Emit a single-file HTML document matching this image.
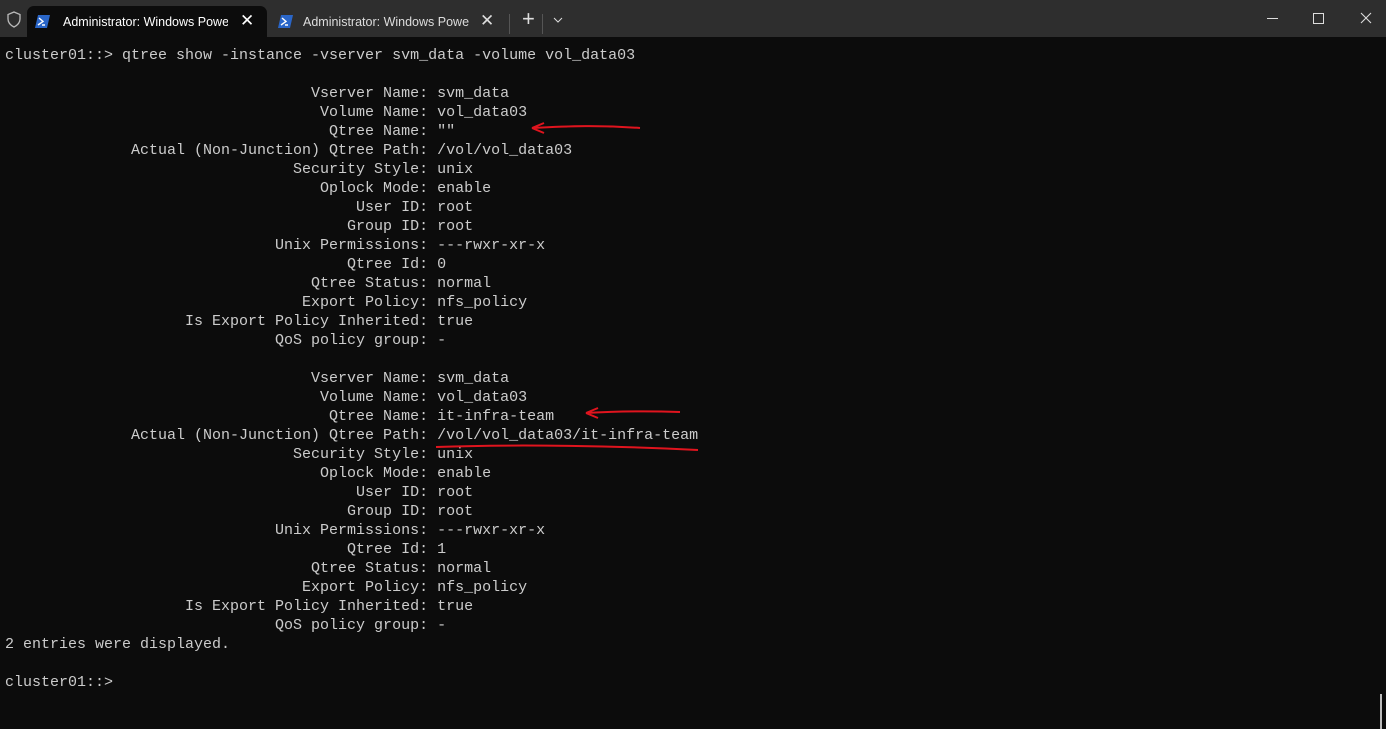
<!DOCTYPE html>
<html><head><style>
html,body{margin:0;padding:0;width:1386px;height:729px;overflow:hidden;background:#0c0c0c;}
.bar{position:absolute;left:0;top:0;width:1386px;height:37px;background:#2e2e2e;}
.tab{position:absolute;top:6px;height:31px;font:12.5px "Liberation Sans",sans-serif;color:#fff;}
.t1{left:27px;width:240px;background:#0c0c0c;border-radius:7px 7px 0 0;}
.t2{left:268px;color:#ddd;}
pre{position:absolute;left:5px;top:46px;margin:0;font:15px/19px "Liberation Mono",monospace;color:#cccccc;}
</style></head><body>
<div class="bar">
<svg style="position:absolute;left:6px;top:11px" width="16" height="17" viewBox="0 0 16 17"><path d="M8 1 L14 3.5 V8 C14 12 11 14.5 8 16 C5 14.5 2 12 2 8 V3.5 Z" fill="none" stroke="#bbb" stroke-width="1.3"/></svg>
<div class="tab t1">
<svg style="position:absolute;left:8px;top:9px" width="15" height="13"><path d="M3 0 H15 L12 13 H0 Z" fill="#2a66c8"/><path d="M4 3 L8 6.5 L3 10 M7 10 H10" stroke="#fff" stroke-width="1.4" fill="none"/></svg>
<span style="position:absolute;left:36px;top:9px;white-space:nowrap;width:165px;overflow:hidden">Administrator: Windows Powe</span>
<span style="position:absolute;left:213px;top:5px;font-size:17px">✕</span>
</div>
<div class="tab t2" style="top:6px;width:240px">
<svg style="position:absolute;left:10px;top:9px" width="15" height="13"><path d="M3 0 H15 L12 13 H0 Z" fill="#2a66c8"/><path d="M4 3 L8 6.5 L3 10 M7 10 H10" stroke="#fff" stroke-width="1.4" fill="none"/></svg>
<span style="position:absolute;left:35px;top:9px;white-space:nowrap;width:166px;overflow:hidden">Administrator: Windows Power</span>
<span style="position:absolute;left:212px;top:5px;font-size:17px">✕</span>
</div>
<div style="position:absolute;left:509px;top:14px;width:1px;height:20px;background:#555"></div>
<div style="position:absolute;left:522px;top:6px;color:#ddd;font:22px 'Liberation Sans',sans-serif">+</div>
<div style="position:absolute;left:542px;top:14px;width:1px;height:20px;background:#555"></div>
<svg style="position:absolute;left:553px;top:17px" width="10" height="6"><path d="M1 1 L5 5 L9 1" stroke="#ddd" fill="none"/></svg>
<div style="position:absolute;left:1267px;top:18px;width:11px;height:1px;background:#ddd"></div>
<div style="position:absolute;left:1313px;top:13px;width:9px;height:9px;border:1px solid #ddd"></div>
<svg style="position:absolute;left:1360px;top:12px" width="12" height="12"><path d="M1 1 L11 11 M11 1 L1 11" stroke="#ddd" stroke-width="1.1"/></svg>
</div>
<pre>cluster01::&gt; qtree show -instance -vserver svm_data -volume vol_data03

                                  Vserver Name: svm_data
                                   Volume Name: vol_data03
                                    Qtree Name: ""
              Actual (Non-Junction) Qtree Path: /vol/vol_data03
                                Security Style: unix
                                   Oplock Mode: enable
                                       User ID: root
                                      Group ID: root
                              Unix Permissions: ---rwxr-xr-x
                                      Qtree Id: 0
                                  Qtree Status: normal
                                 Export Policy: nfs_policy
                    Is Export Policy Inherited: true
                              QoS policy group: -

                                  Vserver Name: svm_data
                                   Volume Name: vol_data03
                                    Qtree Name: it-infra-team
              Actual (Non-Junction) Qtree Path: /vol/vol_data03/it-infra-team
                                Security Style: unix
                                   Oplock Mode: enable
                                       User ID: root
                                      Group ID: root
                              Unix Permissions: ---rwxr-xr-x
                                      Qtree Id: 1
                                  Qtree Status: normal
                                 Export Policy: nfs_policy
                    Is Export Policy Inherited: true
                              QoS policy group: -
2 entries were displayed.

cluster01::&gt;</pre>
<svg style="position:absolute;left:0;top:0" width="1386" height="729">
<path d="M532 128 C570 126 600 125 640 128 M532 128 L544 123 M532 128 L544 133" stroke="#e0141e" stroke-width="2" fill="none"/>
<path d="M586 413 C620 411 650 411 680 412 M586 413 L598 408 M586 413 L598 418" stroke="#e0141e" stroke-width="2" fill="none"/>
<path d="M436 447 C520 444 620 446 698 450" stroke="#e0141e" stroke-width="2" fill="none"/>
<rect x="1380" y="694" width="2" height="35" fill="#bbb"/>
</svg>
</body></html>
